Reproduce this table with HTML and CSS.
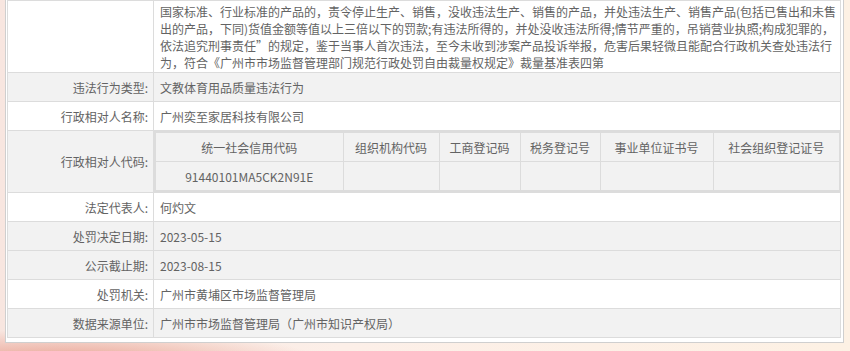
FILE: index.html
```html
<!DOCTYPE html>
<html lang="zh-CN">
<head>
<meta charset="utf-8">
<title>行政处罚信息</title>
<link rel="stylesheet" href="styles.css">
</head>
<body>
<div class="panel">
  <table class="info">
    <colgroup><col class="col-label"><col></colgroup>
    <tbody>
      <tr class="row-white">
        <th class="label"></th>
        <td class="value basis">国家标准、行业标准的产品的，责令停止生产、销售，没收违法生产、销售的产品，并处违法生产、销售产品(包括已售出和未售<br>出的产品，下同)货值金额等值以上三倍以下的罚款;有违法所得的，并处没收违法所得;情节严重的，吊销营业执照;构成犯罪的，<br>依法追究刑事责任”的规定，鉴于当事人首次违法，至今未收到涉案产品投诉举报，危害后果轻微且能配合行政机关查处违法行<br>为，符合《广州市市场监督管理部门规范行政处罚自由裁量权规定》裁量基准表四第</td>
      </tr>
      <tr class="row-gray">
        <th class="label">违法行为类型:</th>
        <td class="value">文教体育用品质量违法行为</td>
      </tr>
      <tr class="row-white">
        <th class="label">行政相对人名称:</th>
        <td class="value">广州奕至家居科技有限公司</td>
      </tr>
      <tr class="row-gray">
        <th class="label">行政相对人代码:</th>
        <td class="value nested-cell">
          <table class="codes">
            <colgroup>
              <col class="c1"><col class="c2"><col class="c3"><col class="c4"><col class="c5"><col class="c6">
            </colgroup>
            <tr>
              <td>统一社会信用代码</td>
              <td>组织机构代码</td>
              <td>工商登记码</td>
              <td>税务登记号</td>
              <td>事业单位证书号</td>
              <td>社会组织登记证号</td>
            </tr>
            <tr>
              <td>91440101MA5CK2N91E</td>
              <td></td>
              <td></td>
              <td></td>
              <td></td>
              <td></td>
            </tr>
          </table>
        </td>
      </tr>
      <tr class="row-white">
        <th class="label">法定代表人:</th>
        <td class="value">何灼文</td>
      </tr>
      <tr class="row-gray">
        <th class="label">处罚决定日期:</th>
        <td class="value">2023-05-15</td>
      </tr>
      <tr class="row-gray">
        <th class="label">公示截止期:</th>
        <td class="value">2023-08-15</td>
      </tr>
      <tr class="row-white">
        <th class="label">处罚机关:</th>
        <td class="value">广州市黄埔区市场监督管理局</td>
      </tr>
      <tr class="row-gray">
        <th class="label">数据来源单位:</th>
        <td class="value">广州市市场监督管理局（广州市知识产权局）</td>
      </tr>
    </tbody>
  </table>
</div>
</body>
</html>
```

FILE: styles.css
```css
html, body {
  margin: 0;
  padding: 0;
}

body {
  width: 850px;
  height: 351px;
  overflow: hidden;
  font-family: "Noto Sans CJK SC", "Noto Sans", sans-serif;
  font-size: 12px;
  color: #636363;
  background:
    radial-gradient(ellipse 260px 30px at 60px 360px, #e9a394 0%, rgba(233,163,148,0) 100%),
    linear-gradient(to right, #f8e6e0 0%, #fcefe8 40%, #fdf1e4 100%);
}

.panel {
  margin: 0 6px 0 5px;
  border: 1px solid #cfcfcf;
  border-top: 0;
  padding: 0 2px 4px 1px;
  background: #fff;
}

.info {
  width: 100%;
  border-collapse: collapse;
  table-layout: fixed;
  border: 1px solid #dcdcdc;
}

.col-label {
  width: 146px;
}

.info th,
.info > tbody > tr > td {
  border: 1px solid #dcdcdc;
  height: 28px;
  padding: 0;
  font-weight: normal;
  line-height: 17px;
}

.label {
  text-align: right;
  padding-right: 5px !important;
  white-space: nowrap;
}

.value {
  text-align: left;
  padding-left: 6px !important;
}

.basis {
  white-space: nowrap;
  padding-top: 2px !important;
  padding-bottom: 1px !important;
}

.row-gray > th,
.row-gray > td {
  background: #f2f2f2;
}

.row-white > th,
.row-white > td {
  background: #fff;
}

.info > tbody > tr > td.nested-cell {
  padding: 0 !important;
}

.codes {
  width: 100%;
  border-collapse: collapse;
  table-layout: fixed;
  border: 2px solid #dcdcdc;
}

.codes td {
  border: 1px solid #dcdcdc;
  height: 28px;
  padding: 0;
  text-align: center;
  background: #f2f2f2;
  white-space: nowrap;
}

.c1 { width: 188px; }
.c2 { width: 96px; }
.c3 { width: 81px; }
.c4 { width: 80px; }
.c5 { width: 113px; }
.c6 { width: 127px; }
```
